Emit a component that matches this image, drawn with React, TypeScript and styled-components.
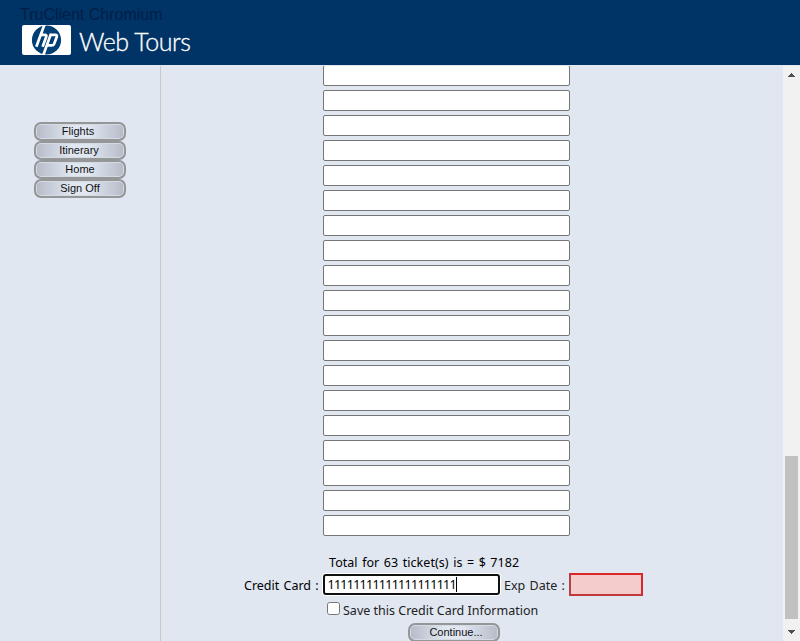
import React from "react";
import styled, { createGlobalStyle } from "styled-components";

const GlobalStyle = createGlobalStyle`
  *, *::before, *::after { box-sizing: border-box; }
  html, body { margin: 0; height: 641px; overflow: hidden; background: #e0e7f1; }
`;

const Page = styled.div`
  width: 800px;
  height: 641px;
  display: grid;
  grid-template: 66px 575px / 160px 1px 622px 17px;
  overflow: hidden;
  background: #e0e7f1;
  color: #000;
`;

const Header = styled.header`
  grid-column: 1 / -1;
  height: 65px;
  padding: 5px 20px 0;
  background: #003366;
`;

const Watermark = styled.div`
  height: 20px;
  font: 16px/20px "Liberation Sans", sans-serif;
  white-space: nowrap;
  color: #001f46;
`;

const Brand = styled.div`
  display: flex;
  padding-left: 2px;
`;

const Logo = styled.svg`
  display: block;
  width: 49px;
  height: 30px;
`;

const BrandName = styled.div`
  margin-left: 8px;
  font: 300 25px/32px Lato, sans-serif;
  letter-spacing: -0.45px;
  white-space: nowrap;
  color: #fff;
  -webkit-text-stroke: 0.3px #fff;
`;

const Nav = styled.nav`
  display: flex;
  flex-direction: column;
  padding: 56px 0 0 34px;
`;

const PillButton = styled.button<{ $shift?: number; $lift?: number }>`
  display: block;
  width: 92px;
  height: 19px;
  flex: none;
  margin: 0;
  padding: 0 ${(p) => Math.max(0, -(p.$shift ?? 0))}px ${(p) => p.$lift ?? 1}px ${(p) => Math.max(0, p.$shift ?? 0)}px;
  border: 2px solid #949698;
  border-radius: 7px;
  background: linear-gradient(90deg, #b5bac6 0, #c2c8d4 12%, #e0e7f1 40%, #e0e7f1 60%, #c2c8d4 88%, #b5bac6 100%);
  box-shadow: inset 0 0 0 1px #d5dbe5;
  font: 11px/14px "Liberation Sans", sans-serif;
  white-space: nowrap;
  color: #111;
`;

const Divider = styled.div`
  background: #c9c9c7;
`;

const Content = styled.main`
  display: flex;
  flex-direction: column;
  overflow: hidden;
  font: 12.5px/16px "Noto Sans", sans-serif;

  > * { flex: none; }
`;

const Passengers = styled.div`
  display: flex;
  flex-direction: column;
  gap: 4px;
  height: 470px;
  padding-left: 162px;
  justify-content: flex-end;
`;

const PassengerInput = styled.input`
  width: 247px;
  height: 21px;
  flex: none;
  padding: 1px 4px;
  border: 1px solid #767676;
  border-radius: 2px;
  background: #fff;
  outline: none;
`;

const Total = styled.div`
  margin: 18px 0 0 168px;
  height: 19px;
  line-height: 18px;
  white-space: nowrap;
  letter-spacing: 0.05px;
  word-spacing: 1.2px;
`;

const PaymentRow = styled.div`
  display: flex;
  align-items: center;
  height: 23px;
  padding-left: 83px;
  white-space: nowrap;
  word-spacing: 1px;
`;

const CardLabel = styled.label`
  width: 79px;
  padding-top: 3px;
`;

const CardField = styled.div`
  display: flex;
  align-items: center;
  width: 177px;
  height: 21px;
  padding: 0 0 0 2.5px;
  border: 2px solid #101010;
  border-radius: 3px;
  box-shadow: 0 0 0 1px #fff;
  background: #fff;
  letter-spacing: -0.73px;
`;

const Caret = styled.span`
  width: 1px;
  height: 15px;
  margin-left: 0.5px;
  background: #000;
`;

const ExpLabel = styled.label`
  width: 65px;
  margin-left: 4px;
  padding-top: 3px;
  color: #222;
`;

const ExpInput = styled.input`
  width: 74px;
  height: 23px;
  margin: 0;
  padding: 1px 3px;
  border: 2px solid;
  border-color: #dc2528 #dc2528 #bf383a #b34144;
  background: #f5cccc;
  outline: none;
`;

const SaveRow = styled.label`
  display: flex;
  align-items: center;
  height: 26px;
  padding: 3px 0 0 166px;
  white-space: nowrap;
  color: #222;
`;

const Checkbox = styled.input`
  width: 13px;
  height: 13px;
  margin: -4px 3px 0 0;
`;

const Actions = styled.div`
  padding: 1px 0 0 247px;
`;

const Scrollbar = styled.div`
  display: flex;
  flex-direction: column;
  align-items: center;
  background: #f1f1f1;
`;

const Arrow = styled.svg`
  display: block;
  width: 17px;
  height: 17px;
  flex: none;
`;

const Thumb = styled.div`
  width: 13px;
  height: 163px;
  margin-top: 373px;
  background: #c1c1c1;
`;

const rows = Array.from({ length: 19 }, (_, i) => i);

export default function App() {
  return (
    <>
      <GlobalStyle />
      <Page>
        <Header>
          <Watermark>TruClient Chromium</Watermark>
          <Brand>
            <Logo viewBox="0 0 49 30">
              <rect width="49" height="30" rx="2" fill="#fff" />
              <circle cx="24.5" cy="15" r="14.6" fill="#003f75" />
              <g fill="none" stroke="#fff" strokeWidth="2.7">
                <path d="M22.7-1 14.3 21.8M18.2 9.8h4.6q2.1 0 1.4 2.1L20.6 21.8" />
                <path d="M29 8.6 21 31M28.6 9.8h4.6q2.2 0 1.5 2.2l-2.6 7q-.6 1.4-2.2 1.4H25" />
              </g>
            </Logo>
            <BrandName>Web Tours</BrandName>
          </Brand>
        </Header>
        <Nav>
          <PillButton $shift={-4} $lift={2}>Flights</PillButton>
          <PillButton $shift={-2}>Itinerary</PillButton>
          <PillButton>Home</PillButton>
          <PillButton>Sign Off</PillButton>
        </Nav>
        <Divider />
        <Content>
          <Passengers>
            {rows.map((i) => (
              <PassengerInput key={i} type="text" />
            ))}
          </Passengers>
          <Total>Total for 63 ticket(s) is = $ 7182</Total>
          <PaymentRow>
            <CardLabel>Credit Card :</CardLabel>
            <CardField>
              <span>11111111111111111111</span>
              <Caret />
            </CardField>
            <ExpLabel>Exp Date :</ExpLabel>
            <ExpInput type="text" />
          </PaymentRow>
          <SaveRow>
            <Checkbox type="checkbox" />
            Save this Credit Card Information
          </SaveRow>
          <Actions>
            <PillButton $shift={4}>Continue...</PillButton>
          </Actions>
        </Content>
        <Scrollbar>
          <Arrow viewBox="0 0 17 17" shapeRendering="crispEdges">
            <path d="M5 11h7L8.5 7z" fill="#505050" />
          </Arrow>
          <Thumb />
          <Arrow viewBox="0 0 17 17" shapeRendering="crispEdges">
            <path d="M5 11h7l-3.5 4z" fill="#505050" />
          </Arrow>
        </Scrollbar>
      </Page>
    </>
  );
}
